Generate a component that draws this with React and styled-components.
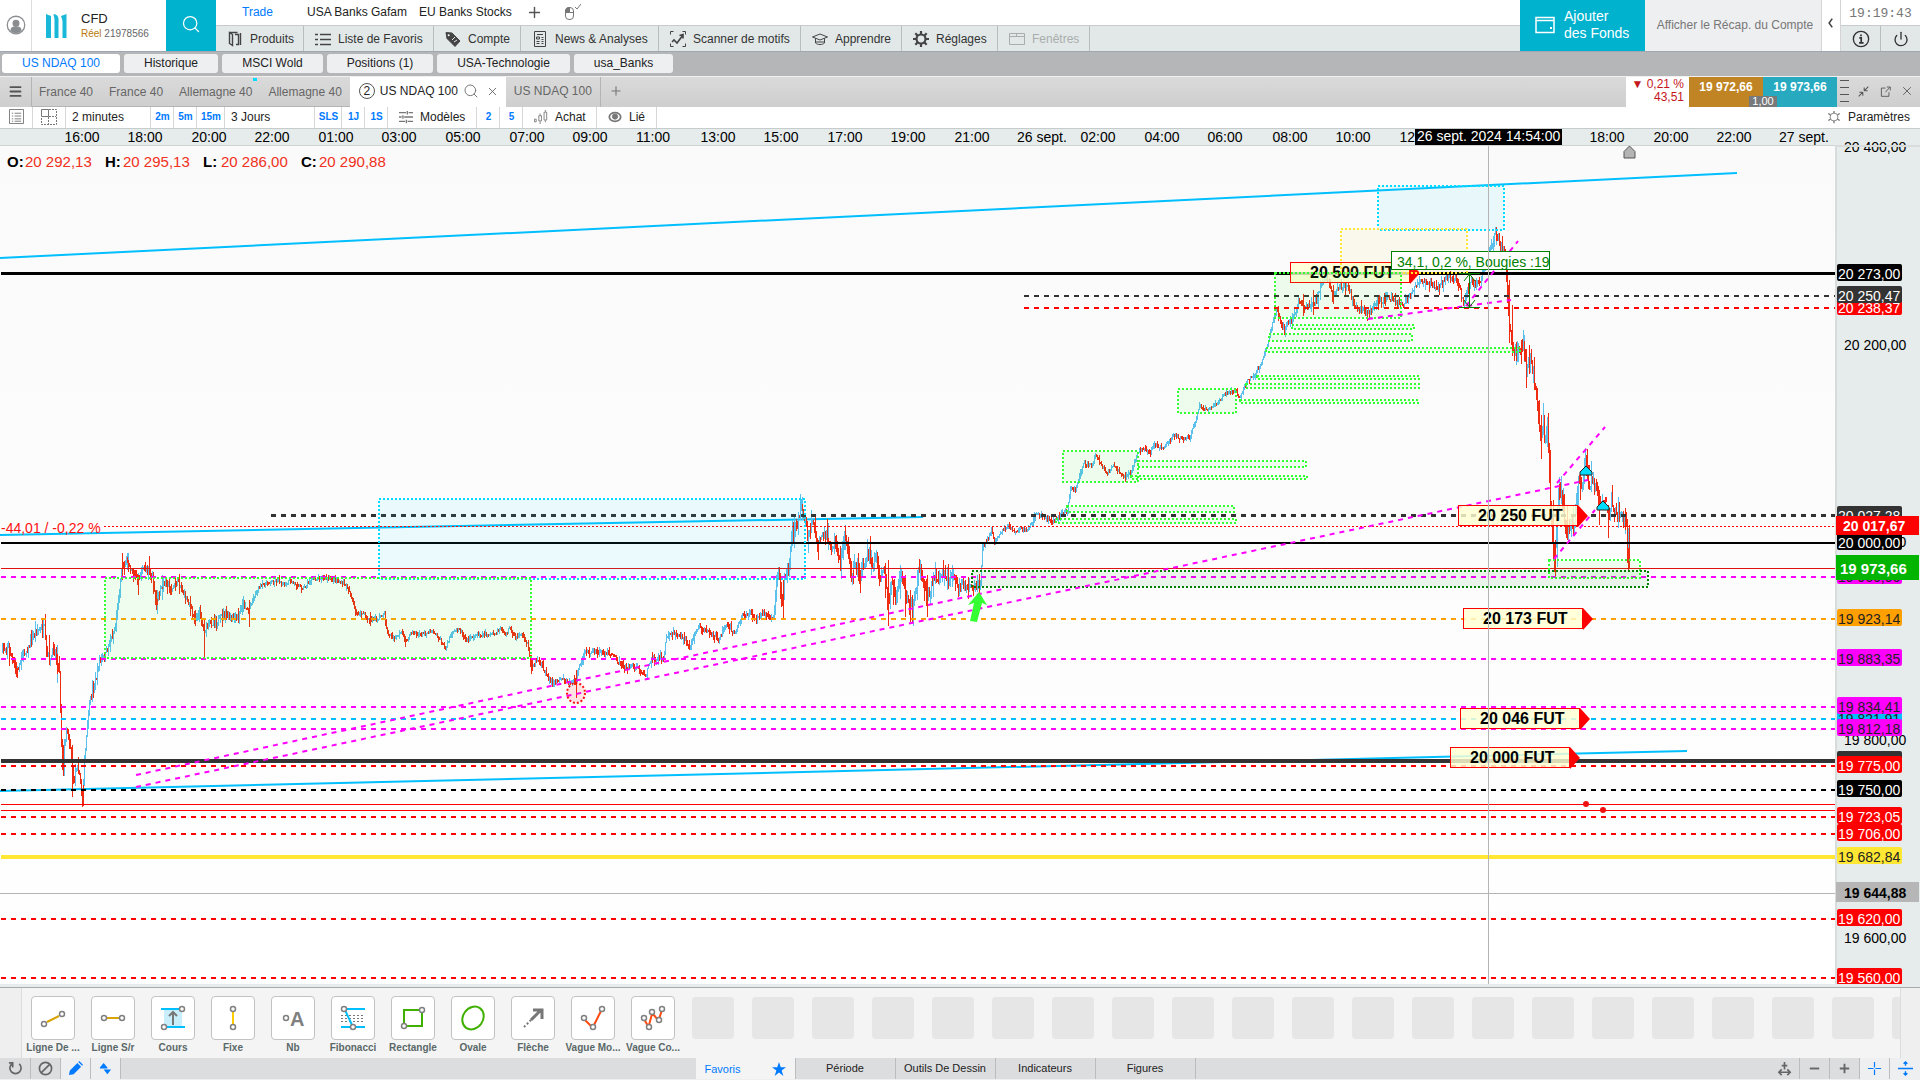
import React from 'react';
import styled, { createGlobalStyle, css } from 'styled-components';
import { Search, X, Plus, Power, Menu } from 'lucide-react';

const colors = {
  teal: '#00b2ce',
  blue: '#007aff',
  bar: '#e2e8e8',
  axis: '#e6ecec',
  line: '#b9bdbe',
  red: '#ff0000',
  dark: '#333333',
  magenta: '#ff00ff',
  sky: '#00bfff',
  cyan: '#00dcff',
  green: '#33ff33',
  forest: '#008000',
};

/* ---------- chart data ---------- */

const PLOT_TOP = 146;
const priceToY = price => Math.round((20402 - price) * 0.9884) + PLOT_TOP;

const LEVELS = [
  { price: 20273, color: '#000', width: 3 },
  { price: 20250.47, color: colors.dark, dash: '5 5', from: 1024 },
  { price: 20238.37, color: colors.red, dash: '5 5', from: 1024 },
  { price: 20027.28, color: colors.dark, dash: '5 5', width: 3, from: 271 },
  { price: 20017, color: colors.red, dash: '2 2', width: 1, from: 104 },
  { price: 20000, color: '#000' },
  { price: 19973.66, color: '#e01010', width: 1 },
  { price: 19966, color: colors.magenta, dash: '5 5' },
  { price: 19923.14, color: '#ffa000', dash: '5 5' },
  { price: 19883.35, color: colors.magenta, dash: '5 5' },
  { price: 19834.41, color: colors.magenta, dash: '5 5' },
  { price: 19821.91, color: colors.sky, dash: '5 5' },
  { price: 19812.18, color: colors.magenta, dash: '5 5' },
  { price: 19780, color: colors.dark, width: 4 },
  { price: 19775, color: colors.red, dash: '5 5' },
  { price: 19750, color: '#000', dash: '5 5' },
  { price: 19735, color: colors.red, width: 1 },
  { price: 19729, color: colors.red, width: 1 },
  { price: 19723.05, color: colors.red, dash: '5 5' },
  { price: 19706, color: colors.red, dash: '5 5' },
  { price: 19682.84, color: '#ffe733', width: 4 },
  { price: 19620, color: colors.red, dash: '5 5' },
  { price: 19560, color: colors.red, dash: '5 5' },
];

const TRENDS = [
  [0, 258, 1737, 173, colors.sky],
  [0, 535, 923, 517, colors.sky],
  [0, 791, 1687, 751, colors.sky],
  [136, 775, 1003, 589, colors.magenta],
  [136, 787, 1588, 480, colors.magenta],
  [1368, 319, 1511, 300, colors.magenta],
  [1466, 306, 1518, 241, colors.magenta],
  [1557, 483, 1605, 427, colors.magenta],
  [1554, 559, 1595, 510, colors.magenta],
];

const ZONES = [
  [379, 499, 805, 579, colors.cyan],
  [1378, 186, 1504, 230, colors.cyan],
  [1341, 229, 1467, 273, '#ffe733'],
  [105, 578, 531, 658, colors.green],
  [1275, 273, 1401, 318, colors.green],
  [1292, 325, 1414, 329, colors.green],
  [1269, 334, 1412, 341, colors.green],
  [1266, 348, 1520, 352, colors.green],
  [1257, 376, 1419, 379, colors.green],
  [1246, 384, 1419, 388, colors.green],
  [1240, 400, 1418, 403, colors.green],
  [1178, 389, 1236, 413, colors.green],
  [1063, 451, 1138, 482, colors.green],
  [1138, 461, 1306, 467, colors.green],
  [1131, 476, 1307, 479, colors.green],
  [1067, 506, 1234, 512, colors.green],
  [1056, 519, 1236, 523, colors.green],
  [1549, 560, 1640, 578, colors.green],
  [972, 571, 1648, 587, colors.forest],
];

const NOTES = [
  { x: 1290, y: 262, text: '20 500 FUT' },
  { x: 1458, y: 505, text: '20 250 FUT' },
  { x: 1463, y: 608, text: '20 173 FUT' },
  { x: 1460, y: 708, text: '20 046 FUT' },
  { x: 1450, y: 747, text: '20 000 FUT' },
];

const TIMES = [
  [82, '16:00'], [145, '18:00'], [209, '20:00'], [272, '22:00'], [336, '01:00'],
  [399, '03:00'], [463, '05:00'], [527, '07:00'], [590, '09:00'], [653, '11:00'],
  [718, '13:00'], [781, '15:00'], [845, '17:00'], [908, '19:00'], [972, '21:00'],
  [1042, '26 sept.'], [1098, '02:00'], [1162, '04:00'], [1225, '06:00'],
  [1290, '08:00'], [1353, '10:00'], [1417, '12:00'], [1607, '18:00'],
  [1671, '20:00'], [1734, '22:00'], [1804, '27 sept.'],
];

const SCALE = [
  [20400, '20 400,00'],
  [20200, '20 200,00'],
  [20000, '20 000,00'],
  [19800, '19 800,00'],
  [19600, '19 600,00'],
];

const TAGS = [
  [20273, '20 273,00', '#000', '#fff'],
  [20238.37, '20 238,37', colors.red, '#fff'],
  [20250.47, '20 250,47', colors.dark, '#fff'],
  [20027.28, '20 027,28', colors.dark, '#fff'],
  [20000, '20 000,00', '#000', '#fff'],
  [19966, '19 966,06', colors.magenta, '#222'],
  [19923.14, '19 923,14', '#ffa000', '#222'],
  [19883.35, '19 883,35', colors.magenta, '#222'],
  [19821.91, '19 821,91', colors.sky, '#222'],
  [19834.41, '19 834,41', colors.magenta, '#222'],
  [19812.18, '19 812,18', colors.magenta, '#222'],
  [19780, '', colors.dark, '#fff'],
  [19775, '19 775,00', colors.red, '#fff'],
  [19750, '19 750,00', '#000', '#fff'],
  [19723.05, '19 723,05', colors.red, '#fff'],
  [19706, '19 706,00', colors.red, '#fff'],
  [19682.84, '19 682,84', '#ffe733', '#222'],
  [19620, '19 620,00', colors.red, '#fff'],
  [19560, '19 560,00', colors.red, '#fff'],
];

// x,y turning points of the two minute series
const SERIES = `2,650 9,645 17,673 22,657 29,647 36,632 45,627 47,653 51,660 54,647 57,655 60,670
62,740 63,765 67,727 71,747 74,780 78,763 83,797 85,763 89,710 93,690 97,677 100,660 105,657
111,640 116,627 120,590 122,567 127,560 134,570 138,580 143,570 149,567 154,583 156,603 161,590
166,580 172,590 179,580 184,593 190,603 195,620 201,613 204,630 210,623 219,620 225,613 232,618
239,617 243,603 249,610 254,597 259,587 268,582 279,580 286,585 290,580 304,588 312,580 320,577
337,580 348,586 353,600 356,613 364,613 370,620 379,618 385,613 388,633 395,638 402,632 407,640
413,630 420,635 433,630 440,638 446,648 451,635 459,627 467,640 478,634 496,634 501,627 505,635
510,628 516,638 522,633 528,643 531,662 542,663 548,677 554,683 562,677 569,683 576,680 580,667
585,652 598,652 612,653 623,667 638,667 646,675 652,657 664,658 667,637 674,632 683,637 691,647
696,630 700,627 709,632 720,638 728,623 735,633 742,617 751,610 756,620 765,613 774,618 777,587
779,567 783,610 785,573 789,570 793,527 797,527 802,503 805,517 808,533 814,523 818,547 823,533
829,537 833,550 835,537 841,563 845,530 850,560 853,577 856,560 860,580 863,567 870,553 873,567
876,553 881,577 885,570 888,597 892,583 896,600 902,580 906,597 913,612 917,587 920,567 923,580
927,597 932,587 936,573 939,580 943,570 950,583 954,573 959,587 972,587 981,583 983,547 986,543
992,530 995,543 1001,532 1010,526 1016,532 1021,528 1027,530 1033,522 1037,513 1046,517 1053,522
1061,515 1068,510 1071,487 1076,490 1080,477 1084,463 1093,465 1096,453 1102,465 1108,472
1115,465 1120,472 1126,477 1133,470 1138,453 1144,447 1150,453 1155,445 1164,447 1174,435
1182,438 1190,437 1196,420 1200,405 1207,410 1218,403 1225,393 1236,390 1240,398 1248,380
1255,375 1262,363 1269,340 1273,323 1277,310 1285,328 1294,317 1300,300 1306,307 1317,300
1322,283 1329,277 1333,297 1340,287 1349,287 1356,307 1369,313 1379,303 1388,295 1402,305
1411,293 1420,280 1430,283 1439,287 1448,275 1458,280 1464,303 1471,283 1480,283 1487,260
1496,233 1502,243 1507,267 1509,310 1512,343 1518,357 1524,343 1527,370 1533,363 1537,397
1541,440 1544,413 1545,443 1548,423 1550,480 1553,543 1555,567 1557,527 1559,487 1563,500
1566,523 1568,537 1572,517 1574,530 1577,500 1579,480 1582,493 1586,455 1587,473 1590,483
1593,480 1597,493 1600,507 1605,503 1608,515 1612,503 1617,513 1622,517 1627,523 1628,555 1629,568`
  .split(/\s+/)
  .map(pair => pair.split(',').map(Number));

const SPIKES = {
  red: [[9, 650, 666], [17, 668, 678], [45, 614, 640], [49, 635, 665], [63, 745, 776],
    [72, 745, 797], [83, 785, 806], [122, 553, 580], [138, 575, 595], [149, 556, 575],
    [156, 590, 610], [195, 610, 626], [204, 620, 658], [249, 600, 627], [370, 612, 626],
    [405, 636, 647], [531, 655, 674], [576, 670, 698], [783, 580, 620], [818, 540, 560],
    [853, 570, 584], [860, 570, 593], [888, 560, 626], [905, 575, 617], [893, 580, 605],
    [927, 575, 617], [1303, 294, 316], [1313, 290, 315], [1333, 285, 304], [1369, 310, 319],
    [1378, 295, 310], [1509, 280, 343], [1512, 305, 348], [1521, 340, 364], [1526, 350, 388],
    [1529, 345, 370], [1539, 400, 430], [1541, 415, 459], [1550, 450, 487], [1553, 500, 560],
    [1555, 540, 577], [1567, 505, 540], [1580, 475, 500], [1587, 449, 480], [1599, 490, 525],
    [1608, 505, 538], [1625, 508, 530], [1629, 525, 569]],
  blue: [[22, 650, 661], [57, 645, 683], [64, 750, 776], [127, 553, 570], [128, 553, 572],
    [157, 590, 614], [162, 575, 600], [243, 596, 612], [776, 575, 602], [792, 520, 545],
    [802, 497, 520], [808, 530, 553], [828, 523, 550], [845, 525, 550], [871, 550, 575],
    [913, 600, 622], [917, 570, 600], [920, 560, 580], [945, 565, 575], [1320, 280, 300],
    [1385, 292, 305], [1496, 230, 245], [1516, 345, 365], [1524, 335, 362], [1543, 403, 435],
    [1547, 417, 447], [1557, 510, 567], [1559, 477, 520], [1563, 488, 515], [1573, 505, 530],
    [1578, 476, 505], [1585, 448, 475], [1628, 528, 553]],
};

const volatility = x => {
  if (x < 250) return 13;
  if (x < 530) return 6;
  if (x < 775) return 9;
  if (x < 980) return 21;
  if (x < 1275) return 6;
  if (x < 1500) return 11;
  return 22;
};

function buildCandles() {
  let seed = 7;
  const random = () => {
    seed = (seed * 16807) % 2147483647;
    return seed / 2147483647;
  };
  const paths = { red: '', blue: '' };
  let prev = SERIES[0][1];
  for (let i = 1; i < SERIES.length; i++) {
    const [x0, y0] = SERIES[i - 1];
    const [x1, y1] = SERIES[i];
    for (let x = x0; x < x1; x++) {
      const vol = volatility(x);
      const y = y0 + ((y1 - y0) * (x + 1 - x0)) / (x1 - x0) + (random() - 0.5) * vol * 0.5;
      const wick = random() * random() * vol * 0.8;
      const top = Math.round(Math.min(prev, y) - wick);
      const bottom = Math.round(Math.max(prev, y) + random() * random() * vol * 0.8) + 1;
      paths[y < prev ? 'blue' : 'red'] += `M${x + 0.5} ${top}V${bottom}`;
      prev = y;
    }
  }
  Object.keys(SPIKES).forEach(key => {
    SPIKES[key].forEach(([x, a, b]) => {
      paths[key] += `M${x + 0.5} ${a}V${b}`;
    });
  });
  return paths;
}

const candles = buildCandles();

/* ---------- chart ---------- */

const Note = ({ x, y, text }) => (
  <g>
    <rect x={x + 0.5} y={y + 0.5} width="119" height="20" fill="#ffffd2" fillOpacity="0.82" stroke="red" />
    <path d={`M${x + 120} ${y}l10 11l-10 11z`} fill="red" />
    <NoteText x={x + 20} y={y + 16}>{text}</NoteText>
  </g>
);

const House = ({ x, y, fill }) => (
  <path d={`M${x} ${y}l6 6v3h-12v-3z`} fill={fill} stroke="#222" />
);

const Plot = () => (
  <PlotSvg role="img" aria-label="US NDAQ 100, 2 minutes">
    <g transform={`translate(0 ${-PLOT_TOP})`}>
      {TRENDS.filter(t => t[4] === colors.sky).map(([x1, y1, x2, y2, color]) => (
        <line key={`${x1}-${y1}`} x1={x1} y1={y1} x2={x2} y2={y2} stroke={color} strokeWidth="2" />
      ))}
      <g shapeRendering="crispEdges">
        <path d={candles.blue} stroke="#5bc0eb" />
        <path d={candles.red} stroke="#ef2b12" />
      </g>
      <g shapeRendering="crispEdges">
        {LEVELS.map(({ price, color, width = 2, dash, from = 1 }) => {
          const y = priceToY(price) - (width % 2 ? 0.5 : 0);
          return (
            <line
              key={price}
              x1={from}
              x2="100%"
              y1={y}
              y2={y}
              stroke={color}
              strokeWidth={width}
              strokeDasharray={dash}
            />
          );
        })}
      </g>
      {NOTES.slice(0, 1).map(note => <Note key={note.text} {...note} />)}
      <g shapeRendering="crispEdges">
        {ZONES.map(([x1, y1, x2, y2, color]) => (
          <rect
            key={`${x1}-${y1}`}
            x={x1}
            y={y1}
            width={x2 - x1}
            height={y2 - y1}
            fill={color}
            fillOpacity="0.07"
            stroke={color}
            strokeWidth="2"
            strokeDasharray="2 2"
          />
        ))}
      </g>
      {TRENDS.filter(t => t[4] === colors.magenta).map(([x1, y1, x2, y2, color]) => (
        <line
          key={`${x1}-${y1}`}
          x1={x1}
          y1={y1}
          x2={x2}
          y2={y2}
          stroke={color}
          strokeWidth="2"
          strokeDasharray="5 5"
        />
      ))}
      {NOTES.slice(1).map(note => <Note key={note.text} {...note} />)}

      <g stroke={colors.forest} strokeWidth="1" fill="none">
        <path d="M1459 273.5h21M1459 307.5h21M1469.5 274v33M1464 281l5.5-7l5.5 7M1464 300l5.5 7l5.5-7" />
      </g>
      <rect x="1391.5" y="251.5" width="158" height="18" fill="#fff" stroke={colors.forest} />
      <PlotText x="1397" y="267" fill={colors.forest}>34,1, 0,2 %, Bougies :19</PlotText>

      <ellipse cx="576" cy="693" rx="9" ry="10" fill="#ff0000" fillOpacity="0.1" stroke="#ff1010" strokeWidth="2" strokeDasharray="2 2" />
      <path d="M979 592l8 13l-5-2l-5 19l-7-1l4-18l-6 2z" fill={colors.green} />
      <path d="M1589 465v6M1606 497v5M1600 500v3" stroke="#ff2020" strokeWidth="2" />
      <House x={1586} y={466} fill="#00dcff" />
      <House x={1603} y={501} fill="#00dcff" />
      <path d="M1629.500 146l5.500 5.500v6.500h-11v-6.500z" fill="#b4b4b4" stroke="#555" />
      <circle cx="1586" cy="804" r="3" fill="#f01010" />
      <circle cx="1603" cy="810" r="3" fill="#f01010" />

      <OhlcText x="7" y="167" $bold>O:</OhlcText>
      <OhlcText x="25" y="167">20 292,13</OhlcText>
      <OhlcText x="105" y="167" $bold>H:</OhlcText>
      <OhlcText x="123" y="167">20 295,13</OhlcText>
      <OhlcText x="203" y="167" $bold>L:</OhlcText>
      <OhlcText x="221" y="167">20 286,00</OhlcText>
      <OhlcText x="301" y="167" $bold>C:</OhlcText>
      <OhlcText x="319" y="167">20 290,88</OhlcText>
      <PlotText x="1" y="533" fill="#ff1010">-44,01 / -0,22 %</PlotText>

      <g shapeRendering="crispEdges" stroke="#b4b4b4">
        <line x1="1488.5" x2="1488.5" y1={PLOT_TOP} y2="984" />
        <line x1="0" x2="100%" y1="893.5" y2="893.5" />
      </g>
    </g>
  </PlotSvg>
);

const TimeAxis = () => (
  <TimeSvg>
    {TIMES.map(([x, label]) => (
      <PlotText key={`${x}`} x={x} y="13" textAnchor="middle">{label}</PlotText>
    ))}
    <rect x="1415" y="0" width="147" height="16" fill="#000" />
    <PlotText x="1417" y="12" fill="#fff">26 sept. 2024 14:54:00</PlotText>
  </TimeSvg>
);

const PriceAxis = () => (
  <PriceSvg>
    <g transform={`translate(0 ${-PLOT_TOP})`}>
      <rect x="0" y={PLOT_TOP} width="2" height="838" fill="#d8dddb" />
      {SCALE.map(([price, label]) => (
        <PlotText key={price} x="9" y={priceToY(price) + 4}>{label}</PlotText>
      ))}
      <rect x="0" y="145" width="85" height="2" fill="#d8dddb" />
      {TAGS.map(([price, label, fill, color]) => (
        <g key={price}>
          <rect x="2" y={priceToY(price) - 10} width="65" height="17" rx="2" fill={fill} />
          {label && <PlotText x="3" y={priceToY(price) + 5} fill={color}>{label}</PlotText>}
        </g>
      ))}
      <rect x="1" y="516" width="83" height="19" fill={colors.red} />
      <PlotText x="8" y="531" fill="#fff" fontWeight="bold">20 017,67</PlotText>
      <rect x="1" y="555" width="83" height="25" fill="#00b400" />
      <OhlcText x="5" y="574" $bold $color="#fff">19 973,66</OhlcText>
      <rect x="1" y="882" width="83" height="20" fill="#b6b6b6" />
      <PlotText x="9" y="898" fontWeight="bold">19 644,88</PlotText>
    </g>
  </PriceSvg>
);

/* ---------- icons ---------- */

const Icon = ({ size = 16, color = '#444', children, ...rest }) => (
  <svg width={size} height={size} viewBox="0 0 16 16" fill="none" stroke={color} aria-hidden="true" {...rest}>
    {children}
  </svg>
);

const icons = {
  products: (
    <Icon>
      <path d="M2.500 1.500v11l3 2v-11zM2.500 1.500h8M8 3.500h3.500v10H9M13.500 2v12" strokeWidth="1.400" />
    </Icon>
  ),
  list: (
    <Icon strokeWidth="1.500">
      <path d="M5 3.500h11M5 8.500h11M5 13.500h11M0 3.500h3M0 8.500h3M0 13.500h3" />
    </Icon>
  ),
  tag: (
    <Icon>
      <path d="M1 1.500l6 .500l8 8l-5 5.500l-8-8z" fill="#444" />
      <circle cx="3.700" cy="4.200" r="1" fill="#fff" stroke="none" />
      <path d="M7 9l3-3M9 11l3-2" stroke="#e2e8e8" />
    </Icon>
  ),
  news: (
    <Icon>
      <path d="M2.500 .5h11v15h-11zM5 3.500h6M4.500 6h3v2h-3zM9.500 6.500h2M9.500 8.500h2M4.500 10.500h3M9.500 10.500h2M4.500 12.500h3M9.500 12.500h2" />
    </Icon>
  ),
  scanner: (
    <Icon>
      <path d="M.5 3.500v-3h3M12.500.5h3v3M15.500 12.500v3h-3M3.500 15.500h-3v-3" strokeWidth="1" />
      <path d="M2 11l2-2l3 3l6-8M9.500 4.500l3.500-1v4" strokeWidth="1.600" />
    </Icon>
  ),
  learn: (
    <Icon>
      <path d="M.500 6l7.500-3l7.500 3l-7.500 3zM3.500 7.500v4.500c2 2 7 2 9 0v-4.500M3.500 11h9" />
    </Icon>
  ),
  gear: (
    <Icon>
      <circle cx="8" cy="8" r="4.500" strokeWidth="2.200" />
      <path d="M8 0v3M8 13v3M0 8h3M13 8h3M2.300 2.300l2.200 2.200M11.500 11.500l2.200 2.200M13.700 2.300l-2.200 2.200M4.500 11.500l-2.200 2.200" strokeWidth="2.200" />
    </Icon>
  ),
  windows: (
    <Icon color="#a9adad">
      <path d="M.5 2.500h15v11h-15zM.5 5.500h15M7.500 2.500v3" />
    </Icon>
  ),
};

const toolIcons = {
  trend: <><path d="M16 26l12-6" stroke="#d9a300" strokeWidth="2" /><Knobs at={[[13, 28], [31, 18]]} /></>,
  flat: <><path d="M16 22h12" stroke="#d9a300" strokeWidth="2" /><Knobs at={[[13, 22], [31, 22]]} /></>,
  price: (
    <>
      <path d="M13 13h18v18H13z" fill="#c9eefb" />
      <path d="M10 13h18M16 31h18" stroke={colors.sky} strokeWidth="2" />
      <path d="M22 29V16M18 20l4-4l4 4" stroke="#777" strokeWidth="2" fill="none" />
      <Knobs at={[[31, 13], [13, 31]]} />
    </>
  ),
  vertical: <><path d="M22 16v12" stroke="#ffcc00" strokeWidth="2" /><Knobs at={[[22, 13], [22, 31]]} /></>,
  text: (
    <>
      <Knobs at={[[15, 22]]} />
      <text x="19" y="30" fill="#808080" fontSize="20" fontWeight="bold">A</text>
    </>
  ),
  fib: (
    <>
      <path d="M16 13h18M10 31h24" stroke={colors.sky} strokeWidth="2" />
      <path d="M10 19.500h24M10 22.500h24M10 25.500h24" stroke="#777" strokeDasharray="2 2" />
      <path d="M14 14l7 15" stroke={colors.sky} strokeWidth="2" />
      <Knobs at={[[13, 13], [22, 31]]} />
    </>
  ),
  rect: (
    <>
      <path d="M28 14H13v13M16 30h15V17" stroke="#3fb000" strokeWidth="2" fill="none" />
      <Knobs at={[[31, 14], [13, 30]]} />
    </>
  ),
  oval: <ellipse cx="22" cy="22" rx="10" ry="12" transform="rotate(35 22 22)" stroke="#3fb000" strokeWidth="2" fill="none" />,
  arrow: (
    <>
      <path d="M13 31l7-7" stroke="#777" strokeWidth="2" strokeDasharray="2 2" />
      <path d="M20 24l9-9M22 14h9v9" stroke="#777" strokeWidth="3" fill="none" />
    </>
  ),
  wave: (
    <>
      <path d="M14 24l6 6M23 29l7-14" stroke="#ff4a10" strokeWidth="2" />
      <Knobs at={[[13, 22], [22, 31], [31, 13]]} />
    </>
  ),
  correction: (
    <>
      <path d="M13 23l4 7M18 29l3-11M22 18l5 6M28 23l3-9" stroke="#ff4a10" strokeWidth="2" />
      <Knobs at={[[13, 22], [18, 31], [21, 16], [28, 24], [31, 13]]} />
    </>
  ),
};

function Knobs({ at }) {
  return at.map(([x, y]) => (
    <circle key={`${x}-${y}`} cx={x} cy={y} r="2.500" fill="#fff" stroke="#808080" strokeWidth="1.500" />
  ));
}

/* ---------- bars ---------- */

const MENU = [
  ['products', 'Produits', 88],
  ['list', 'Liste de Favoris', 130],
  ['tag', 'Compte', 87],
  ['news', 'News & Analyses', 138],
  ['scanner', 'Scanner de motifs', 142],
  ['learn', 'Apprendre', 101],
  ['gear', 'Réglages', 96],
  ['windows', 'Fenêtres', 92],
];

const WORKSPACES = [
  ['US NDAQ 100', 118],
  ['Historique', 94],
  ['MSCI Wold', 101],
  ['Positions (1)', 106],
  ['USA-Technologie', 133],
  ['usa_Banks', 99],
];

const TOOLS = [
  ['trend', 'Ligne De ...'],
  ['flat', 'Ligne S/r'],
  ['price', 'Cours'],
  ['vertical', 'Fixe'],
  ['text', 'Nb'],
  ['fib', 'Fibonacci'],
  ['rect', 'Rectangle'],
  ['oval', 'Ovale'],
  ['arrow', 'Flèche'],
  ['wave', 'Vague Mo...'],
  ['correction', 'Vague Co...'],
];

const Header = () => (
  <HeaderBar>
    <Profile aria-label="Profil">
      <Icon size={20} color="#8a8d8f">
        <circle cx="8" cy="8" r="7" />
        <circle cx="8" cy="6.500" r="2.300" fill="#8a8d8f" />
        <path d="M4 12.500c0-4 8-4 8 0c-2 2-6 2-8 0z" fill="#8a8d8f" />
      </Icon>
    </Profile>
    <Account>
      <svg width="21" height="26" viewBox="0 0 21 26" aria-hidden="true">
        <path d="M0 1l5 2v22H0zM7.500 1c3 .500 5 2 5 5v19h-4V7c0-3-1-4-1-6zM15 3l5.500-2v24h-4V9c0-3-1-4-1.500-6z" fill="#1ab8d8" />
      </svg>
      <div>
        <AccountType>CFD</AccountType>
        <AccountId><b>Réel</b> 21978566</AccountId>
      </div>
    </Account>
    <SearchButton aria-label="Rechercher"><Search size={20} strokeWidth={1.5} /></SearchButton>
    <HeaderMain>
      <Layouts>
        <LayoutTab $width={70} $active>Trade</LayoutTab>
        <LayoutTab $width={91}>USA Banks Gafam</LayoutTab>
        <LayoutTab $width={84}>EU Banks Stocks</LayoutTab>
        <IconButton $width={20} aria-label="Ajouter"><Plus size={17} /></IconButton>
        <IconButton $width={16} aria-label="Souris">
          <Icon color="#777">
            <rect x=".5" y="3.500" width="8" height="12" rx="3.500" />
            <path d="M.5 8.500h4v-5c-3 0-4 1.500-4 5zM4.500 8.500h4" fill="#777" />
            <path d="M10 3l2 2l4-5" />
          </Icon>
        </IconButton>
      </Layouts>
      <MenuRow>
        {MENU.map(([icon, label, width]) => (
          <MenuItem key={label} $width={width} disabled={icon === 'windows'}>
            {icons[icon]}
            {label}
          </MenuItem>
        ))}
      </MenuRow>
    </HeaderMain>
    <Funds>
      <svg width="20" height="18" viewBox="0 0 20 18" fill="none" stroke="#fff" strokeWidth="1.500" aria-hidden="true">
        <path d="M1 4V1.500h18V4M1 4.500h18v12H1z" />
        <path d="M15 11h2v2h-2z" fill="#fff" stroke="none" />
      </svg>
      <span>Ajouter<br />des Fonds</span>
    </Funds>
    <Summary>Afficher le Récap. du Compte</Summary>
    <Collapse aria-label="Réduire">
      <Icon size={10} strokeWidth="2.500"><path d="M10 1l-5 7l5 7" /></Icon>
    </Collapse>
    <Status>
      <Clock>19:19:43</Clock>
      <StatusButtons>
        <StatusButton aria-label="Informations">
          <Icon size={18} color="#333">
            <circle cx="8" cy="8" r="6.800" strokeWidth="1.200" />
            <path d="M6.500 7h1.700v4.500M6.300 11.500h4M8 4v1.600" strokeWidth="1.500" />
          </Icon>
        </StatusButton>
        <StatusButton aria-label="Quitter"><Power size={16} strokeWidth={2} /></StatusButton>
      </StatusButtons>
    </Status>
  </HeaderBar>
);

const ChartTabs = () => (
  <ChartTabBar>
    <IconButton $width={32} $divider aria-label="Menu"><Menu size={15} strokeWidth={3} /></IconButton>
    <TabGroup>
      <ChartTab>France 40</ChartTab>
      <ChartTab>France 40</ChartTab>
      <ChartTab>Allemagne 40<Unread /></ChartTab>
      <ChartTab>Allemagne 40</ChartTab>
    </TabGroup>
    <ActiveTab>
      <Count>2</Count>
      <button>US NDAQ 100</button>
      <Search size={16} strokeWidth={1.5} color="#777" />
      <CloseTab aria-label="Fermer"><X size={13} strokeWidth={1.5} /></CloseTab>
    </ActiveTab>
    <LastTab>US NDAQ 100</LastTab>
    <IconButton $width={31} aria-label="Nouvel onglet"><Plus size={14} color="#777" /></IconButton>
    <Spacer />
    <Change>
      <span>▼ 0,21 %</span>
      <span>43,51</span>
    </Change>
    <Quotes>
      <Quote $color="#c08425">19 972,66</Quote>
      <Quote $color="#27aac0">19 973,66</Quote>
      <Spread>1,00</Spread>
    </Quotes>
    <WindowTools>
      <Grip><i /><i /><i /><i /></Grip>
      <IconButton $width={22} aria-label="Réduire">
        <Icon size={11} color="#555"><path d="M9 7h5M9 7V2M9 7l6-6M7 9H2M7 9v5M7 9l-6 6" strokeWidth="1.500" /></Icon>
      </IconButton>
      <IconButton $width={22} aria-label="Détacher">
        <Icon size={11} color="#555"><path d="M8 3H2v12h11V9M8 9l6-7M10 1.500h5v5" strokeWidth="1.300" /></Icon>
      </IconButton>
      <IconButton $width={22} aria-label="Fermer"><X size={14} strokeWidth={1.5} /></IconButton>
    </WindowTools>
  </ChartTabBar>
);

const ChartToolbar = () => (
  <Toolbar>
    <ToolCell $width={33} $center aria-label="Liste">
      <Icon size={15} color="#777"><path d="M.5.5h15v15H.5zM3 4.500h1.500M6 4.500h7M3 7.500h1.500M6 7.500h7M3 10.500h1.500M6 10.500h7M3 13h1.500M6 13h7" /></Icon>
    </ToolCell>
    <ToolCell $width={33} $center aria-label="Grille">
      <Icon color="#777"><path d="M.5.5h7v7h-7z" /><path d="M8 .5h7.500v7M15.500 8v7.500H.5V8M7.500 8v7M8 7.500h7" strokeDasharray="2 1" /></Icon>
    </ToolCell>
    <ToolCell $width={85}>2 minutes</ToolCell>
    <QuickCell $width={23}>2m</QuickCell>
    <QuickCell $width={23}>5m</QuickCell>
    <QuickCell $width={28}>15m</QuickCell>
    <ToolCell $width={90}>3 Jours</ToolCell>
    <QuickCell $width={27}>SLS</QuickCell>
    <QuickCell $width={23}>1J</QuickCell>
    <QuickCell $width={23}>1S</QuickCell>
    <ToolCell $width={89} $wide>
      <Icon size={14} color="#777"><path d="M0 3h8M11 3h5M0 8h3M6 8h10M0 13h7M10 13h6M9.500 1v4M4.500 6v4M8.500 11v4" strokeWidth="1.500" /></Icon>
      Modèles
    </ToolCell>
    <QuickCell $width={23}>2</QuickCell>
    <QuickCell $width={23}>5</QuickCell>
    <ToolCell $width={74} $wide>
      <Icon size={14} color="#777"><path d="M.5 10.500h2v3h-2zM5.500 6.500h3v6h-3zM7 4v2M7 13v3M11.500 2.500h3v9h-3zM13 0v2M13 12v2" /></Icon>
      Achat
    </ToolCell>
    <ToolCell $width={60} $wide>
      <Icon size={14} color="#777"><ellipse cx="8" cy="8" rx="6.500" ry="5" strokeWidth="2" /><circle cx="8" cy="7.500" r="3" fill="#777" /></Icon>
      Lié
    </ToolCell>
    <Spacer />
    <Settings>
      <Icon size={14} color="#777">
        <circle cx="8" cy="8" r="4.500" />
        <path d="M8 1v2.500M8 12.500V15M1.500 4l2.500 1.500M12 10.500l2.500 1.500M14.500 4L12 5.500M4 10.500L1.500 12" strokeWidth="1.500" />
      </Icon>
      Paramètres
    </Settings>
  </Toolbar>
);

const DrawingTools = () => (
  <ToolPanel>
    <ToolStrip>
      {TOOLS.map(([icon, label]) => (
        <Tool key={icon}>
          <ToolBox><svg width="44" height="44" viewBox="0 0 44 44" aria-hidden="true">{toolIcons[icon]}</svg></ToolBox>
          <span>{label}</span>
        </Tool>
      ))}
      {Array.from({ length: 21 }, (_, i) => <EmptySlot key={i} />)}
    </ToolStrip>
  </ToolPanel>
);

const Footer = () => (
  <FooterBar>
    <FooterButton aria-label="Annuler"><Icon size={15} color="#666" strokeWidth="1.800"><path d="M12 3a6 6 0 1 1-8 0M1 2h4v5" /></Icon></FooterButton>
    <FooterButton aria-label="Désactiver"><Icon size={15} color="#666" strokeWidth="1.800"><circle cx="8" cy="8" r="6.500" /><path d="M3.500 12.500l9-9" /></Icon></FooterButton>
    <FooterButton $on aria-label="Dessiner"><Icon size={15} color="none"><path d="M1 15l1-5l8-8l4 4l-8 8zM11 1l1-1l4 4l-1 1z" fill={colors.blue} /></Icon></FooterButton>
    <FooterButton $on aria-label="Déplacer"><Icon size={15} color="none"><path d="M2 7l4-5l4 5v1H2zM6 9h8l-4 5z" fill={colors.blue} /></Icon></FooterButton>
    <Spacer />
    <FooterTabs>
      <FooterTab $active>Favoris <Icon size={14} color="none"><path d="M8 0l2 6h6l-5 3.600l2 6.400l-5-4l-5 4l2-6.400L0 6h6z" fill={colors.blue} /></Icon></FooterTab>
      <FooterTab>Période</FooterTab>
      <FooterTab>Outils De Dessin</FooterTab>
      <FooterTab>Indicateurs</FooterTab>
      <FooterTab>Figures</FooterTab>
    </FooterTabs>
    <Spacer />
    <FooterButton aria-label="Ajuster"><Icon size={15} color="#666" strokeWidth="1.800"><path d="M8 1v8M5 5h6M2 12h12M5 9l-3 3l3 3M11 9l3 3l-3 3" /></Icon></FooterButton>
    <FooterButton aria-label="Dézoomer"><Icon size={15} color="#666" strokeWidth="2"><path d="M3 8h10" /></Icon></FooterButton>
    <FooterButton aria-label="Zoomer"><Icon size={15} color="#666" strokeWidth="2"><path d="M3 8h10M8 3v10" /></Icon></FooterButton>
    <FooterButton $on aria-label="Réticule"><Icon size={15} color={colors.blue} strokeWidth="1.300"><path d="M1 8h6M9 8h6M8 1v6M8 9v6" /></Icon></FooterButton>
    <FooterButton $on aria-label="Écarter"><Icon size={15} color={colors.blue} strokeWidth="1.500"><path d="M0 8h16M8 1v4M8 11v4M6 3l2-2l2 2M6 13l2 2l2-2" /></Icon></FooterButton>
  </FooterBar>
);

export default function App() {
  return (
    <Page>
      <GlobalStyle />
      <Header />
      <Workspaces>
        {WORKSPACES.map(([label, width], i) => (
          <Workspace key={label} $width={width} $active={i === 0}>{label}</Workspace>
        ))}
      </Workspaces>
      <ChartTabs />
      <ChartToolbar />
      <ChartArea>
        <TimeAxis />
        <Plot />
        <PriceAxis />
      </ChartArea>
      <DrawingTools />
      <Footer />
    </Page>
  );
}

/* ---------- styles ---------- */

const GlobalStyle = createGlobalStyle`
  * { box-sizing: border-box; }
  body { margin: 0; }
  body, button {
    font-family: "Liberation Sans", Arial, sans-serif;
    font-size: 12px;
    color: #222;
  }
  button {
    border: none;
    background: none;
    padding: 0;
    margin: 0;
    cursor: pointer;
    white-space: nowrap;
  }
  svg { flex-shrink: 0; }
`;

const Page = styled.div`
  display: flex;
  flex-direction: column;
  min-height: 100vh;
  overflow: hidden;
  background: #efefef;
`;

const Spacer = styled.div`
  flex: 1;
`;

const HeaderBar = styled.header`
  display: flex;
  height: 52px;
  background: #fff;
  border-bottom: 1px solid #9fa6b4;
`;

const Profile = styled.button`
  width: 32px;
  padding-bottom: 2px;
  display: flex;
  align-items: center;
  justify-content: center;
  border-right: 1px solid #dcdcdc;
`;

const Account = styled.div`
  width: 134px;
  display: flex;
  align-items: center;
  gap: 14px;
  padding-left: 14px;
`;

const AccountType = styled.div`
  font-size: 13px;
  line-height: 17px;
`;

const AccountId = styled.div`
  font-size: 10px;
  line-height: 14px;
  color: #666;
  b {
    font-weight: normal;
    color: #b8780a;
  }
`;

const SearchButton = styled.button`
  width: 50px;
  padding-bottom: 4px;
  background: ${colors.teal};
  color: #fff;
  display: flex;
  align-items: center;
  justify-content: center;
`;

const HeaderMain = styled.div`
  flex: 1;
  display: flex;
  flex-direction: column;
`;

const Layouts = styled.nav`
  display: flex;
  height: 25px;
  gap: 21px;
  padding-bottom: 1px;
`;

const LayoutTab = styled.button`
  width: ${p => p.$width}px;
  color: ${p => (p.$active ? colors.blue : '#222')};
  ${p => p.$active && css`
    padding-left: 26px;
    text-align: left;
  `}
`;

const IconButton = styled.button`
  width: ${p => p.$width}px;
  display: flex;
  align-items: center;
  justify-content: center;
  color: #555;
  ${p => p.$divider && 'border-right: 1px solid #b4b4b4;'}
`;

const MenuRow = styled.nav`
  flex: 1;
  display: flex;
  background: ${colors.bar};
  border-top: 1px solid #c6cbcb;
`;

const MenuItem = styled.button`
  width: ${p => p.$width}px;
  display: flex;
  align-items: center;
  gap: 7px;
  padding-left: 11px;
  color: #333;
  border-right: 1px solid ${colors.line};
  &:disabled {
    color: #a9adad;
  }
`;

const Funds = styled.button`
  width: 125px;
  padding-bottom: 2px;
  background: ${colors.teal};
  color: #fff;
  font-size: 14px;
  line-height: 17px;
  text-align: left;
  display: flex;
  align-items: center;
  gap: 9px;
  padding-left: 15px;
`;

const Summary = styled.button`
  width: 177px;
  padding: 0 0 2px 4px;
  background: #eeeff1;
  color: #777;
  border-right: 1px solid #d4d4d4;
`;

const Collapse = styled.button`
  width: 19px;
  padding-bottom: 4px;
  border-right: 1px solid #d4d4d4;
`;

const Status = styled.div`
  width: 79px;
  display: flex;
  flex-direction: column;
`;

const Clock = styled.time`
  height: 25px;
  line-height: 27px;
  text-align: center;
  font-family: "Liberation Mono", monospace;
  font-size: 13px;
  color: #777;
`;

const StatusButtons = styled.div`
  flex: 1;
  display: flex;
  background: ${colors.bar};
  border-top: 1px solid #c6cbcb;
`;

const StatusButton = styled.button`
  flex: 1;
  display: flex;
  align-items: center;
  justify-content: center;
  color: #333;
  & + & {
    border-left: 1px solid ${colors.line};
  }
`;

const Workspaces = styled.nav`
  display: flex;
  gap: 4px;
  height: 24px;
  padding: 2px;
  background: #b5b6b8;
`;

const Workspace = styled.button`
  width: ${p => p.$width}px;
  height: 19px;
  padding-bottom: 2px;
  border-radius: 3px;
  background: ${p => (p.$active ? '#fff' : '#eeeff1')};
  color: ${p => (p.$active ? colors.blue : '#222')};
`;

const ChartTabBar = styled.div`
  display: flex;
  height: 31px;
  background: linear-gradient(#dadada, #cecece);
  border-top: 1px solid #f0f0f0;
  & > * {
    padding-bottom: 2px;
  }
`;

const TabGroup = styled.div`
  display: flex;
  gap: 16px;
  padding: 0 8px 0 7px;
  border-bottom: 1px solid #b4b4b4;
`;

const ChartTab = styled.button`
  position: relative;
  color: #666;
`;

const Unread = styled.i`
  position: absolute;
  top: 1px;
  right: -5px;
  width: 4px;
  height: 3px;
  background: ${colors.cyan};
`;

const ActiveTab = styled.div`
  width: 156px;
  display: flex;
  align-items: center;
  gap: 5px;
  padding-left: 9px;
  background: #fff;
`;

const Count = styled.span`
  width: 16px;
  height: 16px;
  line-height: 14px;
  text-align: center;
  border: 1px solid #555;
  border-radius: 50%;
`;

const CloseTab = styled.button`
  display: flex;
  margin-left: 2px;
  color: #555;
`;

const LastTab = styled.button`
  width: 95px;
  color: #666;
  border-right: 1px solid #b4b4b4;
`;

const Change = styled.div`
  width: 63px;
  padding-right: 5px;
  display: flex;
  flex-direction: column;
  justify-content: center;
  text-align: right;
  line-height: 13px;
  color: #c4161c;
  background: #fff;
`;

const Quotes = styled.div`
  position: relative;
  display: flex;
  background: #a8a8a8;
  && {
    padding-bottom: 0;
  }
`;

const Quote = styled.button`
  width: 74px;
  padding-bottom: 10px;
  background: ${p => p.$color};
  color: #fff;
  font-weight: bold;
`;

const Spread = styled.span`
  position: absolute;
  left: 60px;
  bottom: 0;
  width: 28px;
  height: 11px;
  line-height: 11px;
  font-size: 11px;
  text-align: center;
  color: #fff;
  background: #77797b;
`;

const WindowTools = styled.div`
  width: 83px;
  display: flex;
  padding-left: 3px;
`;

const Grip = styled.div`
  width: 12px;
  display: flex;
  flex-direction: column;
  justify-content: center;
  gap: 6px;
  i {
    width: 9px;
    height: 1px;
    background: #555;
  }
`;

const Toolbar = styled.div`
  display: flex;
  height: 21px;
  background: #fff;
  & > * {
    padding-bottom: 2px;
  }
`;

const ToolCell = styled.button`
  width: ${p => p.$width}px;
  display: flex;
  align-items: center;
  justify-content: ${p => (p.$center ? 'center' : 'flex-start')};
  gap: 7px;
  padding-left: ${p => (p.$center ? 0 : p.$wide ? 11 : 6)}px;
  border-right: 1px solid #d6d8d8;
`;

const QuickCell = styled.button`
  width: ${p => p.$width}px;
  padding-left: 1px;
  border-right: 1px solid #d6d8d8;
  color: ${colors.blue};
  font-size: 10px;
  font-weight: bold;
`;

const Settings = styled.button`
  display: flex;
  align-items: center;
  gap: 7px;
  padding-right: 10px;
`;

const ChartArea = styled.main`
  flex: 1;
  display: grid;
  grid-template-columns: minmax(0, 1fr) 85px;
  grid-template-rows: 18px minmax(0, 1fr);
  min-height: 0;
`;

const TimeSvg = styled.svg`
  display: block;
  grid-column: 1 / 3;
  width: 100%;
  height: 18px;
  background: ${colors.axis};
  border-top: 1px solid #c6cbcb;
  border-bottom: 1px solid #d0d5d4;
`;

const PlotSvg = styled.svg`
  display: block;
  width: 100%;
  height: 100%;
  background: linear-gradient(#fafafa, #ffffff);
`;

const PriceSvg = styled.svg`
  display: block;
  width: 100%;
  height: 100%;
  overflow: visible;
  background: ${colors.axis};
`;

const PlotText = styled.text`
  font-size: 14px;
`;

const OhlcText = styled.text`
  font-size: 15px;
  font-weight: ${p => (p.$bold ? 'bold' : 'normal')};
  fill: ${p => p.$color || (p.$bold ? '#000' : '#f03020')};
`;

const NoteText = styled.text`
  font-size: 16px;
  font-weight: bold;
`;

const ToolPanel = styled.section`
  height: 74px;
  padding: 4px 19px 0 21px;
  background: linear-gradient(${colors.axis} 3px, #a6aaab 3px, #a6aaab 4px, #efefef 4px);
`;

const ToolStrip = styled.div`
  display: flex;
  height: 70px;
  padding-left: 1px;
  overflow: hidden;
  background: #f4f4f4;
  border-left: 1px solid #dcdcdc;
  border-right: 1px solid #dcdcdc;
`;

const Tool = styled.button`
  flex: 0 0 60px;
  display: flex;
  flex-direction: column;
  align-items: center;
  gap: 2px;
  padding-top: 8px;
  font-size: 10px;
  font-weight: bold;
  line-height: 12px;
  color: #5a6868;
`;

const ToolBox = styled.div`
  width: 44px;
  height: 44px;
  background: #fff;
  border: 1px solid #c2c2c2;
  border-radius: 4px;
  svg {
    display: block;
    margin: -1px;
  }
`;

const EmptySlot = styled.div`
  flex: 0 0 42px;
  height: 42px;
  margin: 9px;
  background: #e6e6e6;
  border-radius: 4px;
`;

const FooterBar = styled.footer`
  display: flex;
  height: 22px;
  padding-left: 1px;
  background: #dcdddf;
  border-bottom: 1px solid #efefef;
`;

const FooterButton = styled.button`
  width: 30px;
  display: flex;
  align-items: center;
  justify-content: center;
  border-right: 1px solid ${colors.line};
  background: ${p => (p.$on ? '#eeeff1' : 'transparent')};
  &:last-child {
    border-right: none;
  }
`;

const FooterTabs = styled.div`
  display: flex;
`;

const FooterTab = styled.button`
  width: 100px;
  padding-bottom: 1px;
  font-size: 11px;
  border-right: 1px solid ${colors.line};
  ${p => p.$active && css`
    display: flex;
    align-items: center;
    justify-content: space-between;
    padding: 0 9px;
    color: ${colors.blue};
    background: #f4f4f4;
  `}
`;
